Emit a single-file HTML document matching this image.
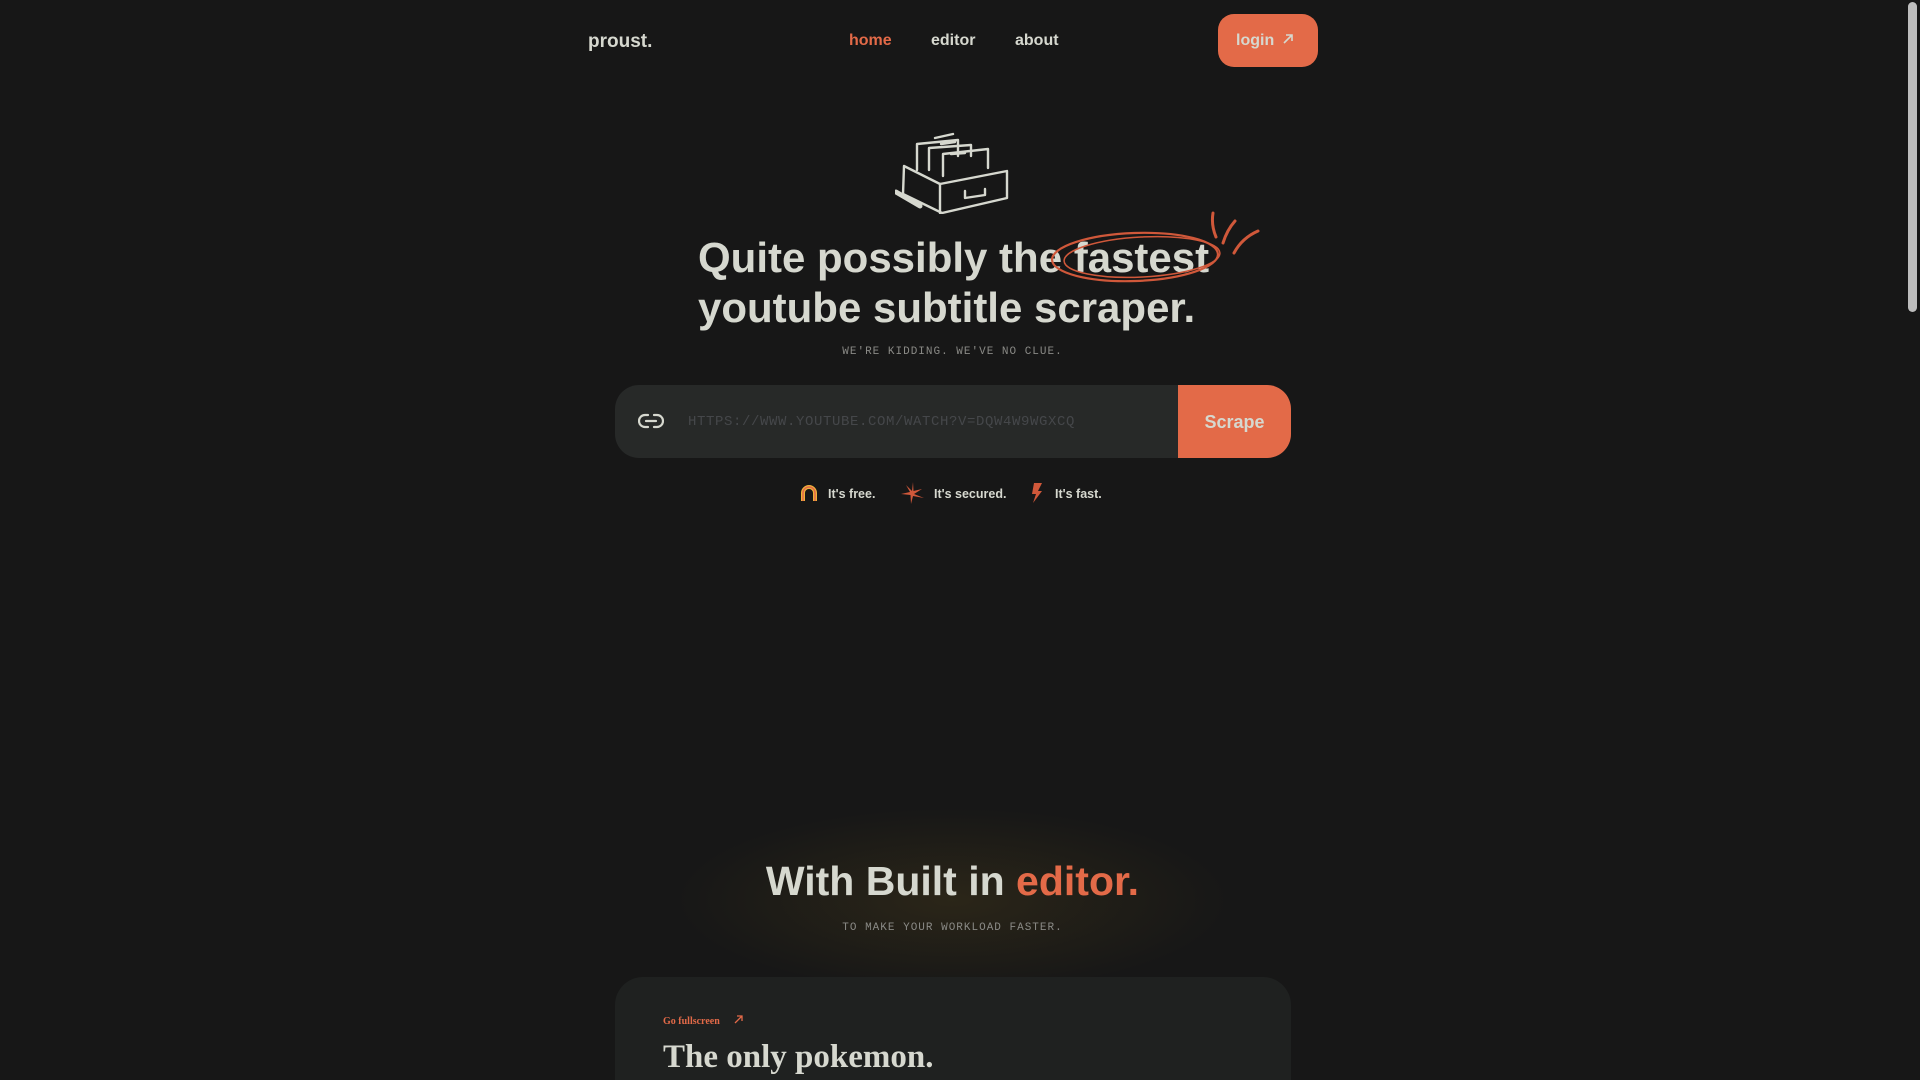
<!DOCTYPE html>
<html><head><meta charset="utf-8"><style>
*{margin:0;padding:0;box-sizing:border-box}
html,body{width:1920px;height:1080px;overflow:hidden}
body{background:#171717;font-family:"Liberation Sans",sans-serif;color:#d6d8cf;position:relative}
.abs{position:absolute}
.b{font-weight:bold}
.mono{font-family:"Liberation Mono",monospace;text-transform:uppercase}
</style></head><body>
<div class="abs b" style="left:588px;top:31px;font-size:19px">proust.</div>
<div class="abs b" style="left:849px;top:32px;font-size:16px;color:#e36a48">home</div>
<div class="abs b" style="left:931px;top:32px;font-size:16px">editor</div>
<div class="abs b" style="left:1015px;top:32px;font-size:16px">about</div>
<div class="abs b" style="left:1218px;top:14px;width:100px;height:53px;border-radius:16px;background:#e36a48;font-size:16px;line-height:53px;padding-left:18px">login <svg width="12" height="12" viewBox="0 0 12 12" style="margin-left:3px"><path d="M2 10L10 2M4 2H10V8" stroke="#d6d8cf" stroke-width="1.6" fill="none"/></svg></div>

<svg class="abs" style="left:895px;top:126px" width="116" height="88" viewBox="0 0 116 88" fill="none" stroke="#d6d8cf" stroke-width="2.4" stroke-linecap="round" stroke-linejoin="round">
<path d="M22 44V18L63 14V30"/><path d="M34 44V22L76 19V30"/><path d="M48 50V28L93 23V42"/><path d="M40 12L58 8M46 18L60 16M56 28L70 27"/>
<path d="M9 40L45 58L112 45V72L47 87L8 68Z"/><path d="M45 58V87"/><path d="M70 65V72L90 69V63"/><path d="M1 66L25 80" stroke-width="5"/>
</svg>

<div class="abs b" style="left:698px;top:233px;font-size:42px;line-height:50px;white-space:nowrap">Quite possibly the fastest<br>youtube subtitle scraper.</div>
<svg class="abs" style="left:1050px;top:205px" width="220" height="80" viewBox="0 0 220 80" fill="none" stroke="#d0583a" stroke-width="2.2" stroke-linecap="round">
<ellipse cx="85" cy="52" rx="83" ry="24" transform="rotate(-2 85 52)"/><ellipse cx="92" cy="52" rx="78" ry="20" transform="rotate(-3 92 52)" stroke-width="1.5"/>
<path d="M163 8Q161 20 166 32M185 16Q177 25 173 38M208 26Q192 33 184 48" stroke-width="3"/></svg>

<div class="abs mono" style="left:0;width:1905px;text-align:center;top:346px;font-size:11px;letter-spacing:1px;color:#8a8a86">We're kidding. We've no clue.</div>

<div class="abs" style="left:615px;top:385px;width:676px;height:73px;border-radius:24px;background:#272928;overflow:hidden">
<svg class="abs" style="left:23px;top:27px" width="26" height="18" viewBox="0 0 26 18" fill="none" stroke="#d6d8cf" stroke-width="2.2" stroke-linecap="round"><path d="M10 3H7a6 6 0 0 0 0 12h3M16 3h3a6 6 0 0 1 0 12h-3M8 9h10"/></svg>
<div class="abs mono" style="left:73px;top:29px;font-size:14px;letter-spacing:0.6px;color:#45474a">https://www.youtube.com/watch?v=dQw4w9WgXcQ</div>
<div class="abs b" style="left:563px;top:0;width:113px;height:73px;background:#e36a48;font-size:18px;line-height:75px;text-align:center">Scrape</div>
</div>

<svg class="abs" style="left:801px;top:485px" width="16" height="17" viewBox="0 0 16 17"><path d="M2 16V8a6 6 0 0 1 12 0v8" fill="none" stroke="#f0b23a" stroke-width="4"/><path d="M2 16V8a6 6 0 0 1 12 0v8" fill="none" stroke="#e36a48" stroke-width="1.5"/></svg>
<div class="abs b" style="left:828px;top:487px;font-size:12.5px">It's free.</div>
<svg class="abs" style="left:900px;top:481px" width="24" height="24" viewBox="0 0 24 24"><path d="M13 1L13.5 10L22 8L14 13L24 17L13 15L11 23L10.5 14L1 13L10 11L6 4L12 10Z" fill="#d0583a"/></svg>
<div class="abs b" style="left:934px;top:487px;font-size:12.5px">It's secured.</div>
<svg class="abs" style="left:1031px;top:483px" width="12" height="20" viewBox="0 0 12 20"><path d="M3 0H11L7 8H11L2 20L5 11H1Z" fill="#d0583a"/></svg>
<div class="abs b" style="left:1055px;top:487px;font-size:12.5px">It's fast.</div>

<div class="abs" style="left:652px;top:800px;width:600px;height:200px;background:radial-gradient(ellipse at center,rgba(80,65,25,0.35),rgba(23,23,23,0) 65%)"></div>
<div class="abs b" style="left:0;width:1905px;text-align:center;top:858px;font-size:41px">With Built in <span style="color:#e36a48">editor.</span></div>
<div class="abs mono" style="left:0;width:1905px;text-align:center;top:922px;font-size:11px;letter-spacing:1px;color:#8a8a86">To make your workload faster.</div>

<div class="abs" style="left:615px;top:977px;width:676px;height:140px;border-radius:28px;background:#1f2120">
<div class="abs b" style="left:48px;top:38px;font-family:'Liberation Serif',serif;font-size:10px;color:#e36a48">Go fullscreen <svg width="9" height="9" viewBox="0 0 9 9" style="margin-left:12px"><path d="M1 8L8 1M3 1H8V6" stroke="#e36a48" stroke-width="1.3" fill="none"/></svg></div>
<div class="abs b" style="left:48px;top:62px;font-family:'Liberation Serif',serif;font-size:33px">The only pokemon.</div>
</div>

<div class="abs" style="left:1905px;top:0;width:15px;height:1080px;background:#171717"></div>
<div class="abs" style="left:1908px;top:2px;width:9px;height:310px;border-radius:5px;background:#bdbdbd"></div>
</body></html>
